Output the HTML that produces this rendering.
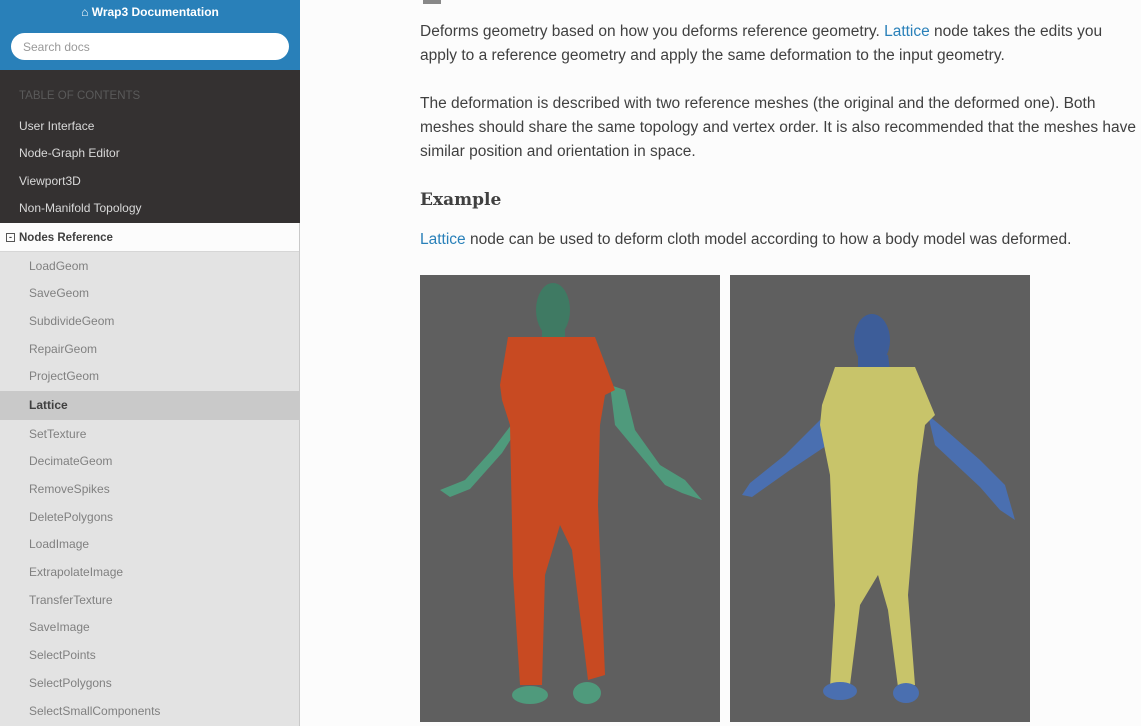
<!DOCTYPE html>
<html><head><meta charset="utf-8"><style>
*{margin:0;padding:0;box-sizing:border-box}
body{width:1141px;height:726px;overflow:hidden;background:#fcfcfc;font-family:"Liberation Sans",sans-serif;position:relative}
.sb{position:absolute;left:0;top:0;width:300px;height:726px;background:#e3e3e3;border-right:1px solid #c9c9c9}
.top{position:absolute;left:0;top:0;width:300px;height:70px;background:#2980b9}
.title{position:absolute;top:5px;left:0;width:300px;text-align:center;color:#fff;font-weight:bold;font-size:12px}
.search{position:absolute;left:11px;top:33px;width:278px;height:27px;background:#fff;border-radius:14px;font-size:12px;color:#999;padding:7px 12px}
.dark{position:absolute;left:0;top:70px;width:300px;height:153px;background:#343131}
.t{position:absolute;left:19px;font-size:12px;white-space:nowrap;transform:translateY(-50%)}
.d{color:#d9d9d9}
.s{color:#808080;left:29px}
.nr{position:absolute;left:0;top:223px;width:299px;height:29px;background:#fcfcfc;border-bottom:1px solid #d6d6d6}
.lat{position:absolute;left:0;top:391px;width:299px;height:29px;background:#c9c9c9}
.c{position:absolute;left:420px;font-size:15.5px;color:#404040;line-height:24px;white-space:nowrap}
a{color:#2980b9;text-decoration:none}
</style></head><body>
<div class="sb">
<div class="top"><div class="title">&#8962; Wrap3 Documentation</div><div class="search">Search docs</div></div>
<div class="dark"></div>
<div class="t" style="top:96px;color:#5a5a5a;font-size:11.5px">TABLE OF CONTENTS</div>
<div class="t d" style="top:126px">User Interface</div>
<div class="t d" style="top:153px">Node-Graph Editor</div>
<div class="t d" style="top:181px">Viewport3D</div>
<div class="t d" style="top:208px">Non-Manifold Topology</div>
<div class="nr"></div>
<div class="t" style="top:238px;left:6px;color:#404040;font-weight:bold;font-size:11.5px"><span style="display:inline-block;width:9px;height:9px;border:1px solid #555;font-size:9px;line-height:6px;text-align:center;vertical-align:middle;margin-right:4px">-</span>Nodes Reference</div>
<div class="lat"></div>
<div class="t s" style="top:266px">LoadGeom</div>
<div class="t s" style="top:293px">SaveGeom</div>
<div class="t s" style="top:321px">SubdivideGeom</div>
<div class="t s" style="top:349px">RepairGeom</div>
<div class="t s" style="top:376px">ProjectGeom</div>
<div class="t s" style="top:405px;color:#404040;font-weight:bold">Lattice</div>
<div class="t s" style="top:434px">SetTexture</div>
<div class="t s" style="top:461px">DecimateGeom</div>
<div class="t s" style="top:489px">RemoveSpikes</div>
<div class="t s" style="top:517px">DeletePolygons</div>
<div class="t s" style="top:544px">LoadImage</div>
<div class="t s" style="top:572px">ExtrapolateImage</div>
<div class="t s" style="top:600px">TransferTexture</div>
<div class="t s" style="top:627px">SaveImage</div>
<div class="t s" style="top:655px">SelectPoints</div>
<div class="t s" style="top:683px">SelectPolygons</div>
<div class="t s" style="top:711px">SelectSmallComponents</div>
</div>
<div style="position:absolute;left:423px;top:0;width:18px;height:4px;background:#888"></div>
<div class="c" style="top:20px">Deforms geometry based on how you deforms reference geometry. <a>Lattice</a> node takes the edits you<br>apply to a reference geometry and apply the same deformation to the input geometry.</div>
<div class="c" style="top:92px">The deformation is described with two reference meshes (the original and the deformed one). Both<br>meshes should share the same topology and vertex order. It is also recommended that the meshes have<br>similar position and orientation in space.</div>
<div class="c" style="top:188px;font-family:'DejaVu Serif',serif;font-weight:bold;font-size:17px">Example</div>
<div class="c" style="top:228px"><a>Lattice</a> node can be used to deform cloth model according to how a body model was deformed.</div>
<svg style="position:absolute;left:420px;top:275px" width="300" height="447">
<rect width="300" height="447" fill="#5f5f5f"/>
<path d="M85,110 L98,120 L95,145 L72,175 L45,205 L20,215 L30,222 L50,214 L82,178 L100,150Z M190,110 L205,115 L215,155 L240,190 L265,205 L282,225 L262,218 L245,210 L220,180 L195,150Z" fill="#4f9a7c"/>
<ellipse cx="133" cy="35" rx="17" ry="27" fill="#3f7a63"/>
<path d="M122,55 L145,55 L145,68 L122,68Z" fill="#3f7a63"/>
<path d="M88,62 L175,62 L195,115 L185,120 L180,150 L178,230 L185,400 L168,405 L152,275 L140,250 L125,300 L122,410 L100,410 L93,300 L90,150 L82,125 L80,110Z" fill="#c84a22"/>
<ellipse cx="110" cy="420" rx="18" ry="9" fill="#4f9a7c"/>
<ellipse cx="167" cy="418" rx="14" ry="11" fill="#4f9a7c"/>
</svg>
<svg style="position:absolute;left:730px;top:275px" width="300" height="447">
<rect width="300" height="447" fill="#5f5f5f"/>
<path d="M95,140 L105,165 L60,195 L22,222 L12,220 L20,208 L55,180Z M198,140 L210,150 L250,185 L275,210 L285,245 L270,235 L250,212 L205,170Z" fill="#4a6fb0"/>
<ellipse cx="142" cy="65" rx="18" ry="26" fill="#3d5d99"/>
<path d="M128,80 L158,80 L160,95 L128,95Z" fill="#3d5d99"/>
<path d="M105,92 L185,92 L205,140 L195,150 L188,200 L178,320 L185,410 L168,412 L158,335 L148,300 L130,330 L120,410 L100,412 L105,330 L100,200 L90,150 L92,130Z" fill="#c8c46a"/>
<ellipse cx="110" cy="416" rx="17" ry="9" fill="#4a6fb0"/>
<ellipse cx="176" cy="418" rx="13" ry="10" fill="#4a6fb0"/>
</svg>
</body></html>
